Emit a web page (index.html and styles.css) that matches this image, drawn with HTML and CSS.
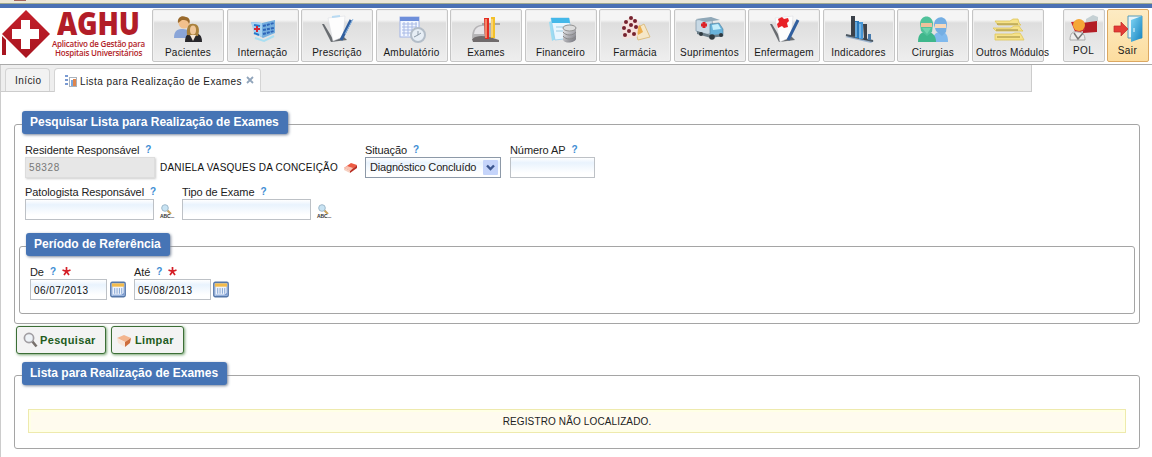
FILE: index.html
```html
<!DOCTYPE html>
<html lang="pt-BR">
<head>
<meta charset="utf-8">
<title>AGHU</title>
<link rel="stylesheet" href="styles.css">
</head>
<body>
<svg class="defs" width="0" height="0">
  <defs>
    <linearGradient id="red" x1="0" y1="0" x2="0" y2="1"><stop offset="0" stop-color="#c4202b"/><stop offset="1" stop-color="#a81520"/></linearGradient>
    <linearGradient id="steel" x1="0" y1="0" x2="1" y2="1"><stop offset="0" stop-color="#f4f4f6"/><stop offset="1" stop-color="#707078"/></linearGradient>
    <linearGradient id="door" x1="0" y1="0" x2="1" y2="1"><stop offset="0" stop-color="#7fd4f4"/><stop offset="1" stop-color="#1583c0"/></linearGradient>
    <symbol id="glass" viewBox="0 0 15 10">
      <path d="M7 6l4 4" stroke="#c9a25a" stroke-width="2"/><circle cx="5" cy="4" r="3.3" fill="#c8e3f3" stroke="#9fb9cb"/>
    </symbol>
    <symbol id="calendar" viewBox="0 0 17 17">
      <rect x=".8" y=".8" width="15.400" height="15.400" rx="1.500" fill="#b4c9ea" stroke="#5577a8" stroke-width="1.400"/>
      <path d="M3 3h11v10l-2 1H3z" fill="#eef3fb"/><path d="M2 2h13v3.500H2z" fill="#f2bb4c"/>
      <path d="M5 7v6M7.500 7v6M10 7v6M12.500 7v6" stroke="#7d9fd0"/><path d="M3 14h9l3-2v3H3z" fill="#7b9bd0"/>
    </symbol>
  </defs>
</svg>
<div class="browser-edge"><i></i></div>
<header class="header">
  <div class="logo">
    <svg width="54" height="52" viewBox="0 0 54 52"><path d="M26 1L50 25 26 49 2 25z" fill="url(#red)"/><path d="M2 27l4 4v15H2z" fill="#a81520"/><path d="M21 11h9v9h9v10h-9v10h-9V30h-9V20h9z" fill="#fff"/></svg>
    <div class="logo-text"><b>AGHU</b><span>Aplicativo de Gestão para</span><span class="l2">Hospitais Universitários</span></div>
  </div>
  <nav class="modules">
    <a class="module"><svg width="32" height="30" viewBox="0 0 32 30"><path d="M2 23c0-8 4-9 9-9s8 3 8 9z" fill="#8aa5d8"/><circle cx="12" cy="8" r="5.500" fill="#f2c08c"/><path d="M6 8c-1-6 4-8 8-6 3 0 5 4 3 7-1-4-4-4-7-4z" fill="#9a6a2c"/><path d="M13 27c0-7 3-9 8-9 6 0 9 2 9 9z" fill="#28272b"/><path d="M15 20c-1-10 3-12 7-11 5 0 6 6 4 12z" fill="#a8803c"/><ellipse cx="21" cy="15" rx="3" ry="4.500" fill="#f0c79a"/><path d="M18 20l3 6 3-6z" fill="#f4e6d6"/></svg><span>Pacientes</span></a>
    <a class="module"><svg width="32" height="30" viewBox="0 0 32 30"><path d="M4 7l11 1 13-3v13l-12 5-8-5z" fill="#75aede"/><path d="M4 7l11 1v14l-8-4z" fill="#a6d2f2"/><path d="M16 11l11-3M16 15l11-2M16 19l11-3" stroke="#2e65b8" stroke-width="2" stroke-dasharray="3 1"/><path d="M7 10l6 1M7 18l5 2" stroke="#2779cb" stroke-width="2"/><path d="M7 14h6M10 11v6" stroke="#d22838" stroke-width="2"/><path d="M8 23l9 3 10-5" fill="none" stroke="#a9dff2" stroke-width="2"/></svg><span>Internação</span></a>
    <a class="module"><svg width="34" height="30" viewBox="0 0 34 30"><path d="M2 9l9 18 16-2-4-4-10 3-9-15z" fill="#686c70"/><path d="M8 3l17-2-2 21-10 4z" fill="#fdfdfd" stroke="#d8dbe0" stroke-width=".5"/><path d="M12 2l8-1" stroke="#b8daf2" stroke-width="2"/><path d="M31 5L21 25" stroke="#315f9e" stroke-width="3"/><path d="M33 4l-8 15" stroke="#8bb7e3"/></svg><span>Prescrição</span></a>
    <a class="module"><svg width="32" height="30" viewBox="0 0 32 30"><rect x="4" y="2" width="19" height="20" fill="#f3f7ff" stroke="#a2b4e6"/><path d="M4 2h19v4H4z" fill="#6d8eda"/><path d="M6 9h15M6 12h15M6 15h15M6 18h15M8 7v14M12 7v14M16 7v14M20 7v14" stroke="#a8b9e5"/><circle cx="22" cy="20" r="7" fill="#e7eef5" stroke="#b3bdc8" stroke-width="2"/><path d="M22 16v4l-4 2M22 20l3-2" stroke="#8d9ba9" fill="none"/></svg><span>Ambulatório</span></a>
    <a class="module"><svg width="32" height="30" viewBox="0 0 32 30"><path d="M2 23c0-9 4-14 12-13h8v14H7z" fill="#b5b4b6"/><path d="M4 19c1-7 5-8 10-8v8z" fill="#e5e4e7"/><path d="M2 24c7-5 14-3 27 1v2H3z" fill="#706b6c"/><path d="M12 9h18" stroke="#73706c"/><path d="M14 3h5v21h-4z" fill="#e32b20"/><path d="M21 2h4v21h-4z" fill="#f3c02b"/><path d="M16 4v19M22 4v18" stroke="#ffe5b3"/></svg><span>Exames</span></a>
    <a class="module"><svg width="32" height="30" viewBox="0 0 32 30"><path d="M4 7l6-2 6 16-9 5z" fill="#9cdcf2"/><path d="M6 3l18 0 3 20-17 2z" fill="#e9f6fe" stroke="#8dcaeb" stroke-width=".7"/><path d="M6 3h18l1 5H7z" fill="#44b8e9"/><path d="M11 12h11M11 16h8" stroke="#9bcce2"/><path d="M18 13v12c2 4 12 3 13-1V12z" fill="url(#steel)"/><ellipse cx="24.500" cy="13" rx="6.500" ry="3" fill="#ddd" stroke="#929292"/><path d="M18 17c3 4 10 4 13 0M18 21c3 4 10 4 13 0" fill="none" stroke="#888"/></svg><span>Financeiro</span></a>
    <a class="module"><svg width="32" height="30" viewBox="0 0 32 30"><path d="M16 14l9-5 6 13-12 3z" fill="#f5e7c8" stroke="#ddbf83"/><path d="M16 13l5-3 3 7-5 3z" fill="#edae4c"/><path d="M11 2l9 4-2 16-14 2-1-15z" fill="#f5e0dc"/><g fill="#76222f"><circle cx="12" cy="3" r="2"/><circle cx="7" cy="7" r="2"/><circle cx="16" cy="6" r="2"/><circle cx="12" cy="10" r="2"/><circle cx="5" cy="13" r="2"/><circle cx="17" cy="12" r="2"/><circle cx="10" cy="16" r="2"/><circle cx="6" cy="20" r="2"/><circle cx="15" cy="19" r="2"/></g></svg><span>Farmácia</span></a>
    <a class="module"><svg width="32" height="30" viewBox="0 0 32 30"><path d="M2 5l16-2 1 15-9 2-8-4z" fill="#c8d9e5" stroke="#7c93a3" stroke-width=".7"/><path d="M2 4l15-2 9 3-15 2z" fill="#90a8b8"/><path d="M7 10h6M10 7v6" stroke="#dd2328" stroke-width="3"/><path d="M16 9l9-1 4 6v7l-13 1z" fill="#69b3db" stroke="#4f7c99" stroke-width=".6"/><path d="M18 10l6-1 3 5-8 1z" fill="#c3edfb"/><path d="M3 16l14 4 12-1v2l-12 2L3 19z" fill="#6a7c87"/><circle cx="7" cy="19" r="2" fill="#303a40"/><circle cx="18" cy="22" r="2.800" fill="#303a40"/><circle cx="27" cy="20" r="2" fill="#303a40"/></svg><span>Suprimentos</span></a>
    <a class="module"><svg width="34" height="30" viewBox="0 0 34 30"><path d="M3 9l9 18 16-2-4-4-10 3-9-15z" fill="#686c70"/><path d="M8 3l18-2-2 21-11 5z" fill="#fdfdfd" stroke="#d8dbe0" stroke-width=".5"/><path d="M11 4l4-2 2 2 4-1 1 3-2 2 1 4-4 1-2-2-4 2-1-4 2-2z" fill="#e82127"/><path d="M31 5L21 25" stroke="#315f9e" stroke-width="3"/></svg><span>Enfermagem</span></a>
    <a class="module"><svg width="32" height="30" viewBox="0 0 32 30"><path d="M2 22l26 6 3-2-23-6z" fill="#9cb4cf"/><path d="M3 20l27 6" stroke="#4d5963" stroke-width="2"/><path d="M8 1h4v20H8z" fill="#3b4149"/><path d="M12 6h4v17h-4z" fill="#2878bb"/><path d="M16 7h4v17h-4z" fill="#4797d7"/><path d="M20 9h4v16h-3z" fill="#3e4248"/><path d="M25 19h3v6h-3z" fill="#487bad"/><path d="M13 7v15M17 9v14" stroke="#a7d5f4"/></svg><span>Indicadores</span></a>
    <a class="module"><svg width="32" height="30" viewBox="0 0 32 30"><path d="M16 27c0-8 3-10 8-10s7 3 7 10z" fill="#80b9ed"/><path d="M17 10c0-9 12-11 13-1l-1 8-4 4-6-5z" fill="#74aee3"/><path d="M18 9h11v4H18z" fill="#f6d8ba"/><path d="M1 27c0-9 4-10 9-10s9 3 9 10z" fill="#3fb78c"/><path d="M3 9c0-10 13-10 13 0l-1 8-5 4-6-5z" fill="#51c29b"/><path d="M4 8h11v4H4z" fill="#eec19b"/><path d="M5 13h9l-4 6z" fill="#70d4ae"/></svg><span>Cirurgias</span></a>
    <a class="module"><svg class="folders" width="34" height="30" viewBox="0 0 34 30"><g fill="#f6e289" stroke="#e0c65c" stroke-width=".8"><path d="M4 6h15l3-2h5l1 4 2 2H7z"/><path d="M2 13h18l3-2h5l2 3 2 2H5z"/><path d="M4 19h17l3-1h5l2 3 2 4H4z"/></g><path d="M6 9h21M5 15h22M6 22h23" stroke="#9b883b"/></svg><span>Outros Módulos</span></a>
  </nav>
  <div class="session">
    <a class="module small"><svg width="32" height="28" viewBox="0 0 32 28"><path d="M18 4l7-4 5 2v4l-12 2z" fill="#c5d0d4"/><path d="M14 8l15-2v11l-14 1z" fill="#b31d25"/><path d="M3 7l12-1 2 9-9 4z" fill="#cc2931"/><circle cx="11" cy="10" r="6" fill="#f5a737"/><path d="M2 25c0-7 3-9 8-8 5 0 7 3 7 8z" fill="#eee" stroke="#aaa"/><path d="M6 18l4 6 5-6" fill="none" stroke="#777" stroke-width="1.500"/></svg><span>POL</span></a>
    <a class="module small exit"><svg width="32" height="28" viewBox="0 0 32 28"><path d="M16 1h14v22H16z" fill="#e9f4f8" stroke="#559bb8"/><path d="M19 5l11-4v22l-11 4z" fill="url(#door)"/><path d="M22 13v4" stroke="#e9fbff"/><path d="M2 11h7V7l7 7-7 7v-4H2z" fill="#e53c35" stroke="#bb2929" stroke-width=".7"/></svg><span>Sair</span></a>
  </div>
</header>
<div class="tabs">
  <a class="tab">Início</a>
  <a class="tab active"><svg width="14" height="14" viewBox="0 0 14 14"><path d="M1 2h3M1 6h3M1 10h3" stroke="#7b9bd2" stroke-width="2"/><rect x="5.500" y="3.500" width="7" height="9" fill="#fff" stroke="#aab2bc"/><path d="M7 6h2v6H7z" fill="#7aa7dd"/><path d="M9 5h3v7H9z" fill="#df854d"/></svg><span>Lista para Realização de Exames</span><svg class="close" width="8" height="8" viewBox="0 0 8 8"><path d="M1 1l6 6M7 1L1 7" stroke="#91a5bb" stroke-width="1.800"/></svg></a>
</div>
<main class="page">
  <section class="panel search">
    <h2 class="legend w-search">Pesquisar Lista para Realização de Exames</h2>
    <div class="row">
      <div class="field resident"><label>Residente Responsável <b class="help">?</b></label><div class="line"><div class="input disabled">58328</div><span class="name">DANIELA VASQUES DA CONCEIÇÃO</span><svg width="15" height="13" viewBox="0 0 15 13"><path d="M1 7l7-5 6 2-7 6z" fill="#ed5b43"/><path d="M1 7l6 3v2L1 9z" fill="#f6d1c2"/><path d="M7 10l7-6v3l-7 5z" fill="#b82e23"/><path d="M1 7l3-2 6 2-3 3z" fill="#f8c4b4"/></svg></div></div>
      <div class="field status"><label>Situação <b class="help">?</b></label><div class="input select">Diagnóstico Concluído<svg width="15" height="15" viewBox="0 0 15 15"><rect width="15" height="15" rx="1" fill="#c5d4fa"/><path d="M4 5.500l3.500 3.500L11 5.500" fill="none" stroke="#3c568f" stroke-width="2.400"/></svg></div></div>
      <div class="field"><label>Número AP <b class="help">?</b></label><div class="input ap"></div></div>
    </div>
    <div class="row second">
      <div class="field pathologist"><label>Patologista Responsável <b class="help">?</b></label><div class="line"><div class="input"></div><div class="look"><svg width="15" height="10"><use href="#glass"/></svg><span>ABC...</span></div></div></div>
      <div class="field"><label>Tipo de Exame <b class="help">?</b></label><div class="line"><div class="input"></div><div class="look"><svg width="15" height="10"><use href="#glass"/></svg><span>ABC...</span></div></div></div>
    </div>
    <section class="panel period">
      <h2 class="legend w-period">Período de Referência</h2>
      <div class="row">
        <div class="field date"><label>De <b class="help">?</b><svg class="star" width="9" height="9" viewBox="0 0 9 9"><path d="M4.500 0v4.500L.5 3M4.500 4.500l4-1.500M4.500 4.500L2 8M4.500 4.500L7 8" fill="none" stroke="#d51f27" stroke-width="1.700"/></svg></label><div class="line"><div class="input">06/07/2013</div><svg class="cal" width="16" height="17"><use href="#calendar"/></svg></div></div>
        <div class="field date until"><label>Até <b class="help">?</b><svg class="star" width="9" height="9" viewBox="0 0 9 9"><path d="M4.500 0v4.500L.5 3M4.500 4.500l4-1.500M4.500 4.500L2 8M4.500 4.500L7 8" fill="none" stroke="#d51f27" stroke-width="1.700"/></svg></label><div class="line"><div class="input">05/08/2013</div><svg class="cal" width="16" height="17"><use href="#calendar"/></svg></div></div>
      </div>
    </section>
  </section>
  <div class="actions">
    <a class="button"><svg width="15" height="16" viewBox="0 0 15 16"><path d="M9 9l4.500 5.500" stroke="#77706c" stroke-width="2.600"/><circle cx="6" cy="6" r="4.600" fill="#eef3f7" stroke="#a29fa3" stroke-width="1.700"/></svg><span>Pesquisar</span></a>
    <a class="button clear"><svg width="16" height="15" viewBox="0 0 16 15"><path d="M1 5l7-3 7 3-6 4z" fill="#f3b58e"/><path d="M1 5l8 4v5l-7-4z" fill="#f8e5d8"/><path d="M9 9l6-4-1 5-5 4z" fill="#cd6d3c"/></svg><span>Limpar</span></a>
  </div>
  <section class="panel results">
    <h2 class="legend w-results">Lista para Realização de Exames</h2>
    <div class="empty"><span>REGISTRO NÃO LOCALIZADO.</span></div>
  </section>
</main>
</body>
</html>
```

FILE: styles.css
```css
* { box-sizing: border-box; }
body { margin: 0; width: 1152px; height: 457px; overflow: hidden; background: #fff; color: #222; font: 11px/14px "Liberation Sans", Arial, sans-serif; display: flex; flex-direction: column; }
svg { display: block; flex: none; }
.defs { position: absolute; }
.browser-edge { height: 8px; flex: none; background: #ece7d8; border-bottom: 4px solid #4a70b4; box-shadow: inset 0 -1px #a3ab91; }
.browser-edge i { display: block; width: 12px; height: 1px; margin-left: 14px; background: #a6665c; }
.header { height: 57px; flex: none; display: flex; border-bottom: 1px solid #aaa; }
.logo { width: 152px; display: flex; padding-top: 1px; color: #b21d28; }
.logo-text { display: flex; flex-direction: column; margin-left: -2px; }
.logo-text b { font: 800 31px/29px "Open Sans", sans-serif; letter-spacing: -.2px; margin-left: 5px; transform: scaleX(.9); transform-origin: left; }
.logo-text span { font: 600 8px/9px "Open Sans", sans-serif; letter-spacing: -.22px; white-space: nowrap; margin-top: 1px; }
.logo-text .l2 { margin: 0 0 0 3px; letter-spacing: -.2px; }
.modules { display: flex; gap: 2.5px; padding-top: 1px; }
.module { width: 72px; height: 53px; border: 1px solid #c5c5c5; border-radius: 2px; background: linear-gradient(#f5f5f5 0 10px, #dedede 13px, #eee 100%); box-shadow: inset 0 0 0 1px #f0f0f0; display: flex; flex-direction: column; align-items: center; padding-top: 5px; color: #181818; }
.module span { font-size: 10px; line-height: 14px; letter-spacing: .25px; white-space: nowrap; margin-top: 1px; }
.module .folders + span { margin-left: 10px; letter-spacing: .18px; }
.session { display: flex; gap: 2px; margin-left: 19px; padding-top: 1px; }
.module.small { width: 42px; }
.module.small span { font-size: 10px; margin-top: 1px; letter-spacing: .4px; }
.module.exit { border-color: #dca861; background: linear-gradient(#fdebc3, #fcdd9f); box-shadow: none; }
.tabs { width: 1032px; height: 27px; flex: none; display: flex; gap: 4px; align-items: stretch; padding: 3px 0 0 4px; background: #eee; border: solid #ccc; border-width: 0 1px 1px; }
.tab { font-size: 10px; letter-spacing: .42px; line-height: 15px; width: 45px; padding: 4px 0 0 9px; border: 1px solid #d4d4d4; border-bottom: 0; border-radius: 4px 4px 0 0; background: #f2f2f2; }
.tab.active { width: 207px; margin-bottom: -1px; background: #fff; display: flex; padding: 5px 0 0 9px; }
.tab.active span { margin-left: 2px; white-space: nowrap; }
.tab .close { margin: 2px 0 0 4px; }
.page { flex: 1; border-left: 1px solid #ccc; padding: 32px 12px 0 13px; }
.panel { border: 1px solid #a5a5a5; border-radius: 3px; }
.legend { margin: 0; height: 23px; width: max-content; padding: 0 8px; border-radius: 3px; background: #4674b5; color: #fff; font-size: 12px; line-height: 22px; white-space: nowrap; box-shadow: 1px 1px 3px #7a879c; }
.w-search { width: 266px; }
.w-period { width: 144px; }
.w-results { width: 205px; }
.search { height: 200px; padding: 0 4px; }
.search > .legend { margin: -14px 0 0 3px; }
.row { display: flex; padding: 9px 0 0 6px; }
.second { padding-top: 7px; }
.field { display: flex; flex-direction: column; }
.resident { width: 340px; }
.status { width: 145px; }
.pathologist { width: 157px; }
label { display: flex; white-space: nowrap; height: 14px; letter-spacing: -.09px; }
.help { margin-left: 6px; color: #3e8dd4; font-size: 10px; }
.line { display: flex; align-items: center; }
.input { width: 129px; height: 21px; border: 1px solid #bdc1c6; background: linear-gradient(#fff, #e9f3fd 25%, #fff 80%); font-size: 10px; line-height: 19px; padding: 0 3px; white-space: nowrap; }
.disabled { width: 130px; background: #e7e7e7; border-color: #ddd; color: #777; box-shadow: 1px 1px 2px #ccc; letter-spacing: .6px; }
.name { width: 183px; margin-left: 5px; padding-top: 1px; font-size: 10px; letter-spacing: .21px; white-space: nowrap; color: #111; }
.select { width: 136px; border-color: #8d99a8; font-size: 11px; padding: 0 2px 0 4px; display: flex; justify-content: space-between; align-items: center; letter-spacing: -.18px; }
.ap { width: 85px; }
.look { margin: 4px 0 0 6px; width: 15px; }
.look span { display: block; font-size: 5px; line-height: 5px; font-weight: bold; letter-spacing: -.1px; color: #333; }
.period { height: 68px; margin-top: 26px; }
.period > .legend { margin: -14px 0 0 6px; }
.period .row { padding: 9px 0 0 10px; }
.date { width: 104px; }
.date .input { width: 77px; color: #111; letter-spacing: .45px; padding: 1px 0 0 3px; }
.cal { margin-left: 3px; }
.until .cal { margin-left: 2px; }
.star { margin: 2px 0 0 6px; }
.actions { display: flex; gap: 5px; padding: 2px 0 0 2px; }
.button { width: 90px; height: 28px; display: flex; align-items: center; padding-left: 6px; border: 1px solid #3c6e36; border-radius: 3px; background: #f3f3f3; box-shadow: 1px 1px 3px #77a572; color: #225c1c; font-weight: bold; }
.button span { margin-left: 2px; letter-spacing: .35px; }
.button.clear { width: 73px; padding-left: 4px; }
.button.clear span { margin-left: 3px; }
.results { height: 74px; margin-top: 21px; }
.results > .legend { margin: -14px 0 0 7px; }
.empty { height: 24px; margin: 24px 13px 0; border: 1px solid #eeeaad; background: #fffbee; box-shadow: inset 0 0 0 2px #ffffe6; text-align: center; font-size: 10px; line-height: 24px; letter-spacing: .13px; }
```
